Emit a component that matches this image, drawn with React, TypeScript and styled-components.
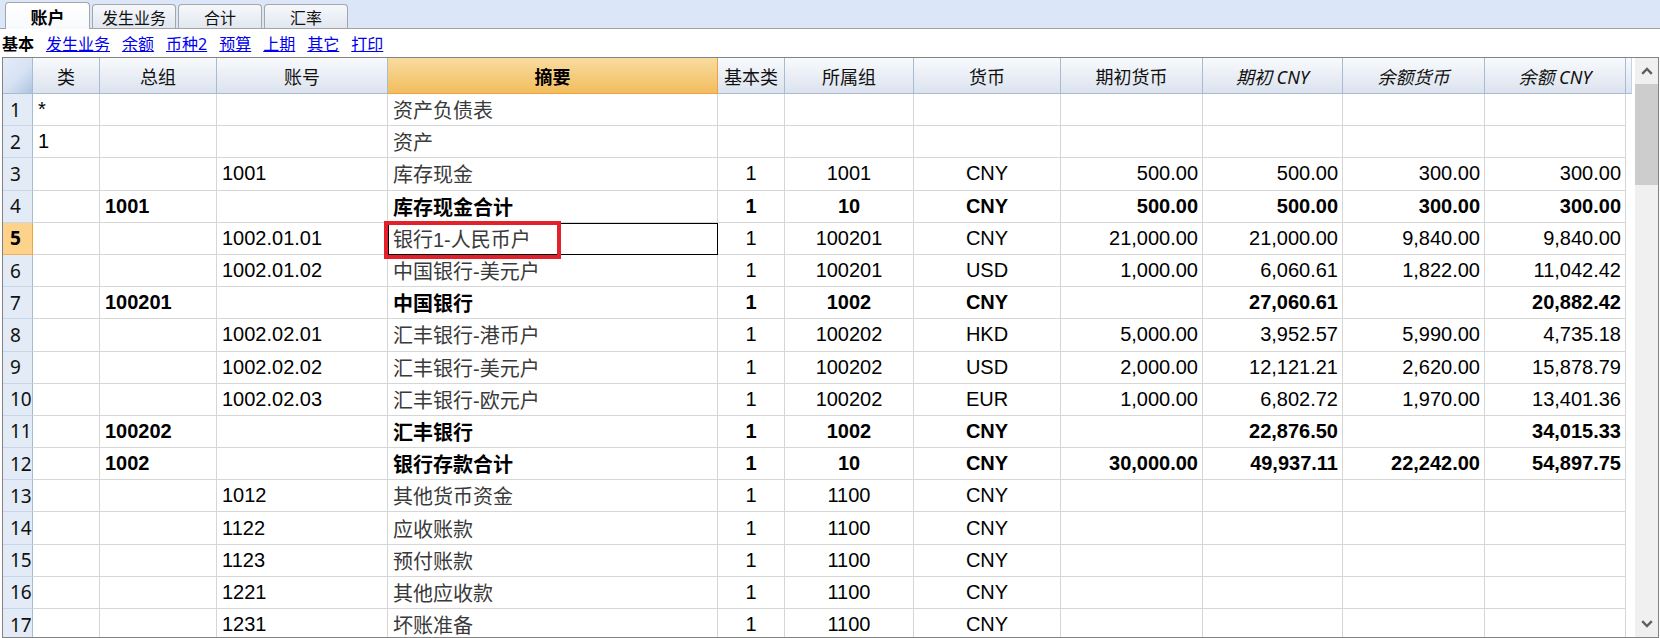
import React from 'react';
import styled, { createGlobalStyle, css } from 'styled-components';

const GlobalStyle = createGlobalStyle`
  html, body { margin: 0; padding: 0; background: #ffffff; }
  body { font-family: 'Liberation Sans', 'Noto Sans CJK SC', sans-serif; }
  * { box-sizing: border-box; }
`;

const COLS = '30px 67px 117px 171px 330px 67px 129px 147px 142px 140px 142px 141px 1fr';

const Page = styled.div`
  position: relative;
  width: 1660px;
  height: 638px;
  overflow: hidden;
  background: #fff;
`;

const TabBar = styled.div`
  height: 29px;
  background: #dbe6f8;
  border-bottom: 1px solid #a3a3a3;
  display: flex;
  align-items: flex-end;
  gap: 2px;
  padding-left: 5px;
`;

const Tab = styled.div<{ $active?: boolean }>`
  width: 84px;
  height: 24px;
  border: 1px solid #a6a6a6;
  border-bottom: none;
  border-radius: 4px 4px 0 0;
  background: linear-gradient(#f6f8fb, #e1e7f0);
  display: flex;
  align-items: center;
  justify-content: center;
  font-family: 'Noto Sans', 'Noto Sans CJK SC', sans-serif;
  font-size: 16px;
  color: #111;
  ${(p) =>
    p.$active &&
    css`
      width: 85px;
      height: 27px;
      margin-bottom: -1px;
      background: linear-gradient(#ffffff, #f7f9fc);
      font-weight: bold;
      font-size: 17px;
      color: #000;
    `}
`;

const Toolbar = styled.div`
  height: 28px;
  display: flex;
  align-items: center;
  gap: 12px;
  padding-left: 2px;
  font-family: 'Noto Sans', 'Noto Sans CJK SC', sans-serif;
  font-size: 16px;
`;

const ToolLabel = styled.span`
  font-weight: bold;
  color: #000;
`;

const ToolLink = styled.a`
  color: #0000ee;
  text-decoration: underline;
  cursor: pointer;
`;

const Frame = styled.div`
  margin: 0 1px 0 2px;
  height: 581px;
  border: 1px solid #838383;
  display: flex;
  overflow: hidden;
`;

const TableArea = styled.div`
  width: 1629px;
  flex: none;
  display: flex;
  flex-direction: column;
`;

const HeaderRow = styled.div`
  display: grid;
  grid-template-columns: ${COLS};
  height: 36px;
  flex: none;
`;

const HeaderCell = styled.div<{ $variant?: 'normal' | 'active' | 'corner' | 'filler'; $italic?: boolean }>`
  display: flex;
  align-items: center;
  justify-content: center;
  font-family: 'Noto Sans', 'Noto Sans CJK SC', sans-serif;
  font-size: 18px;
  color: #111;
  font-style: ${(p) => (p.$italic ? 'italic' : 'normal')};
  background: linear-gradient(#f8fafd, #dce3ee);
  border-right: 1px solid #a9bbd3;
  border-bottom: 1px solid #a9bbd3;
  ${(p) =>
    p.$variant === 'active' &&
    css`
      background: linear-gradient(#f8dca0, #f2bd5e);
      border-right-color: #eda43a;
      border-bottom-color: #eda43a;
      font-weight: bold;
      color: #000;
    `}
  ${(p) =>
    p.$variant === 'corner' &&
    css`
      background: linear-gradient(135deg, #e4ecf8 0%, #d6e2f3 55%, #aec3e0 100%);
    `}
  ${(p) =>
    p.$variant === 'filler' &&
    css`
      border-right: 1px solid #c2d2e8;
    `}
`;

const Row = styled.div`
  display: grid;
  grid-template-columns: ${COLS};
  height: 32.2px;
  flex: none;
`;

const RowNum = styled.div<{ $selected?: boolean }>`
  display: flex;
  align-items: center;
  padding-left: 7px;
  font-family: 'Noto Sans', sans-serif;
  font-size: 19px;
  color: #111;
  background: #e3ebf7;
  border-right: 1px solid #a9bbd3;
  border-bottom: 1px solid #c9d6e8;
  ${(p) =>
    p.$selected &&
    css`
      background: #fdd38b;
      border-bottom-color: #f0b255;
      border-right-color: #eda43a;
      font-weight: bold;
      color: #000;
    `}
`;

const Cell = styled.div<{ $align?: 'left' | 'center' | 'right'; $bold?: boolean; $desc?: boolean; $focused?: boolean }>`
  display: flex;
  align-items: center;
  justify-content: ${(p) => (p.$align === 'right' ? 'flex-end' : p.$align === 'center' ? 'center' : 'flex-start')};
  padding: ${(p) => (p.$align === 'right' ? '0 4px 0 0' : p.$align === 'center' ? '0' : '0 0 0 5px')};
  font-family: 'Liberation Sans', 'Noto Sans CJK SC', sans-serif;
  font-size: 20px;
  white-space: nowrap;
  overflow: hidden;
  color: ${(p) => (p.$desc && !p.$bold ? '#3a3a3a' : '#000')};
  font-weight: ${(p) => (p.$bold ? 'bold' : 'normal')};
  border-right: 1px solid #d6d6d6;
  border-bottom: 1px solid #d6d6d6;
  ${(p) =>
    p.$focused &&
    css`
      outline: 1px solid #000;
      outline-offset: -1px;
    `}
`;

const Filler = styled.div`
  background: #fff;
`;

const Scrollbar = styled.div`
  width: 24px;
  flex: none;
  margin-left: 3px;
  background: #f0f0f0;
  display: flex;
  flex-direction: column;
`;

const ScrollButton = styled.div`
  height: 26px;
  flex: none;
  display: flex;
  align-items: center;
  justify-content: center;
`;

const ScrollTrack = styled.div`
  flex: 1;
  display: flex;
  flex-direction: column;
`;

const ScrollThumb = styled.div`
  height: 101px;
  background: #cdcdcd;
`;

const Annotation = styled.div`
  position: absolute;
  left: 384px;
  top: 221px;
  width: 177px;
  height: 38px;
  border: 4px solid #e3212a;
  pointer-events: none;
`;

type Data = {
  t?: string;
  g?: string;
  acc?: string;
  desc: string;
  b?: string;
  grp?: string;
  cur?: string;
  v1?: string;
  v2?: string;
  v3?: string;
  v4?: string;
  bold?: boolean;
};

const rows: Data[] = [
  { t: '*', desc: '资产负债表' },
  { t: '1', desc: '资产' },
  { acc: '1001', desc: '库存现金', b: '1', grp: '1001', cur: 'CNY', v1: '500.00', v2: '500.00', v3: '300.00', v4: '300.00' },
  { g: '1001', desc: '库存现金合计', b: '1', grp: '10', cur: 'CNY', v1: '500.00', v2: '500.00', v3: '300.00', v4: '300.00', bold: true },
  { acc: '1002.01.01', desc: '银行1-人民币户', b: '1', grp: '100201', cur: 'CNY', v1: '21,000.00', v2: '21,000.00', v3: '9,840.00', v4: '9,840.00' },
  { acc: '1002.01.02', desc: '中国银行-美元户', b: '1', grp: '100201', cur: 'USD', v1: '1,000.00', v2: '6,060.61', v3: '1,822.00', v4: '11,042.42' },
  { g: '100201', desc: '中国银行', b: '1', grp: '1002', cur: 'CNY', v2: '27,060.61', v4: '20,882.42', bold: true },
  { acc: '1002.02.01', desc: '汇丰银行-港币户', b: '1', grp: '100202', cur: 'HKD', v1: '5,000.00', v2: '3,952.57', v3: '5,990.00', v4: '4,735.18' },
  { acc: '1002.02.02', desc: '汇丰银行-美元户', b: '1', grp: '100202', cur: 'USD', v1: '2,000.00', v2: '12,121.21', v3: '2,620.00', v4: '15,878.79' },
  { acc: '1002.02.03', desc: '汇丰银行-欧元户', b: '1', grp: '100202', cur: 'EUR', v1: '1,000.00', v2: '6,802.72', v3: '1,970.00', v4: '13,401.36' },
  { g: '100202', desc: '汇丰银行', b: '1', grp: '1002', cur: 'CNY', v2: '22,876.50', v4: '34,015.33', bold: true },
  { g: '1002', desc: '银行存款合计', b: '1', grp: '10', cur: 'CNY', v1: '30,000.00', v2: '49,937.11', v3: '22,242.00', v4: '54,897.75', bold: true },
  { acc: '1012', desc: '其他货币资金', b: '1', grp: '1100', cur: 'CNY' },
  { acc: '1122', desc: '应收账款', b: '1', grp: '1100', cur: 'CNY' },
  { acc: '1123', desc: '预付账款', b: '1', grp: '1100', cur: 'CNY' },
  { acc: '1221', desc: '其他应收款', b: '1', grp: '1100', cur: 'CNY' },
  { acc: '1231', desc: '坏账准备', b: '1', grp: '1100', cur: 'CNY' },
];

const headers: { label: string; italic?: boolean; active?: boolean }[] = [
  { label: '类' },
  { label: '总组' },
  { label: '账号' },
  { label: '摘要', active: true },
  { label: '基本类' },
  { label: '所属组' },
  { label: '货币' },
  { label: '期初货币' },
  { label: '期初 CNY', italic: true },
  { label: '余额货币', italic: true },
  { label: '余额 CNY', italic: true },
];

const Chevron = ({ up }: { up?: boolean }) => (
  <svg width="12" height="8" viewBox="0 0 12 8">
    <path
      d={up ? 'M1.2 6.8 L6 2 L10.8 6.8' : 'M1.2 1.2 L6 6 L10.8 1.2'}
      fill="none"
      stroke="#606060"
      strokeWidth="2.4"
    />
  </svg>
);

const SELECTED = 5;

export default function App() {
  return (
    <Page>
      <GlobalStyle />
      <TabBar>
        <Tab $active>账户</Tab>
        <Tab>发生业务</Tab>
        <Tab>合计</Tab>
        <Tab>汇率</Tab>
      </TabBar>
      <Toolbar>
        <ToolLabel>基本</ToolLabel>
        <ToolLink>发生业务</ToolLink>
        <ToolLink>余额</ToolLink>
        <ToolLink>币种2</ToolLink>
        <ToolLink>预算</ToolLink>
        <ToolLink>上期</ToolLink>
        <ToolLink>其它</ToolLink>
        <ToolLink>打印</ToolLink>
      </Toolbar>
      <Frame>
        <TableArea>
          <HeaderRow>
            <HeaderCell $variant="corner" />
            {headers.map((h) => (
              <HeaderCell key={h.label} $variant={h.active ? 'active' : 'normal'} $italic={h.italic}>
                {h.label}
              </HeaderCell>
            ))}
            <HeaderCell $variant="filler" />
          </HeaderRow>
          {rows.map((r, i) => {
            const n = i + 1;
            const sel = n === SELECTED;
            return (
              <Row key={n}>
                <RowNum $selected={sel}>{n}</RowNum>
                <Cell $bold={r.bold}>{r.t}</Cell>
                <Cell $bold={r.bold}>{r.g}</Cell>
                <Cell $bold={r.bold}>{r.acc}</Cell>
                <Cell $bold={r.bold} $desc $focused={sel}>{r.desc}</Cell>
                <Cell $align="center" $bold={r.bold}>{r.b}</Cell>
                <Cell $align="center" $bold={r.bold}>{r.grp}</Cell>
                <Cell $align="center" $bold={r.bold}>{r.cur}</Cell>
                <Cell $align="right" $bold={r.bold}>{r.v1}</Cell>
                <Cell $align="right" $bold={r.bold}>{r.v2}</Cell>
                <Cell $align="right" $bold={r.bold}>{r.v3}</Cell>
                <Cell $align="right" $bold={r.bold}>{r.v4}</Cell>
                <Filler />
              </Row>
            );
          })}
        </TableArea>
        <Scrollbar>
          <ScrollButton>
            <Chevron up />
          </ScrollButton>
          <ScrollTrack>
            <ScrollThumb />
          </ScrollTrack>
          <ScrollButton>
            <Chevron />
          </ScrollButton>
        </Scrollbar>
      </Frame>
      <Annotation />
    </Page>
  );
}
